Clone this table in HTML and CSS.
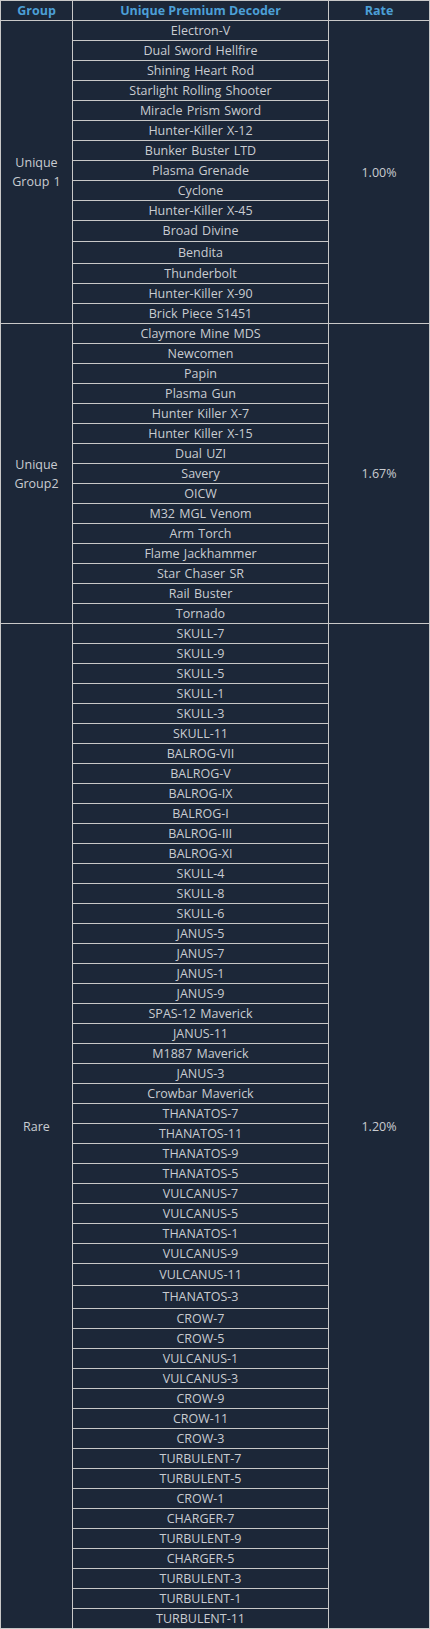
FILE: index.html
```html
<!DOCTYPE html>
<html lang="en">
<head>
<meta charset="utf-8">
<title>Unique Premium Decoder</title>
<link rel="stylesheet" href="styles.css">
</head>
<body>
<div class="table">
  <div class="row head">
    <div class="cell">Group</div>
    <div class="cell">Unique Premium Decoder</div>
    <div class="cell">Rate</div>
  </div>

  <div class="row">
    <div class="cell group">Unique<br>Group 1</div>
    <div class="items">
      <div class="item">Electron-V</div>
      <div class="item">Dual Sword Hellfire</div>
      <div class="item">Shining Heart Rod</div>
      <div class="item">Starlight Rolling Shooter</div>
      <div class="item">Miracle Prism Sword</div>
      <div class="item">Hunter-Killer X-12</div>
      <div class="item">Bunker Buster LTD</div>
      <div class="item">Plasma Grenade</div>
      <div class="item">Cyclone</div>
      <div class="item">Hunter-Killer X-45</div>
      <div class="item tall1">Broad Divine</div>
      <div class="item tall2">Bendita</div>
      <div class="item">Thunderbolt</div>
      <div class="item">Hunter-Killer X-90</div>
      <div class="item">Brick Piece S1451</div>
    </div>
    <div class="cell rate">1.00%</div>
  </div>

  <div class="row">
    <div class="cell group">Unique<br>Group2</div>
    <div class="items">
      <div class="item">Claymore Mine MDS</div>
      <div class="item">Newcomen</div>
      <div class="item">Papin</div>
      <div class="item">Plasma Gun</div>
      <div class="item">Hunter Killer X-7</div>
      <div class="item">Hunter Killer X-15</div>
      <div class="item">Dual UZI</div>
      <div class="item">Savery</div>
      <div class="item">OICW</div>
      <div class="item">M32 MGL Venom</div>
      <div class="item">Arm Torch</div>
      <div class="item">Flame Jackhammer</div>
      <div class="item">Star Chaser SR</div>
      <div class="item">Rail Buster</div>
      <div class="item">Tornado</div>
    </div>
    <div class="cell rate">1.67%</div>
  </div>

  <div class="row">
    <div class="cell group">Rare</div>
    <div class="items">
      <div class="item">SKULL-7</div>
      <div class="item">SKULL-9</div>
      <div class="item">SKULL-5</div>
      <div class="item">SKULL-1</div>
      <div class="item">SKULL-3</div>
      <div class="item">SKULL-11</div>
      <div class="item">BALROG-VII</div>
      <div class="item">BALROG-V</div>
      <div class="item">BALROG-IX</div>
      <div class="item">BALROG-I</div>
      <div class="item">BALROG-<span class="numeral">Ⅲ</span></div>
      <div class="item">BALROG-XI</div>
      <div class="item">SKULL-4</div>
      <div class="item">SKULL-8</div>
      <div class="item">SKULL-6</div>
      <div class="item">JANUS-5</div>
      <div class="item">JANUS-7</div>
      <div class="item">JANUS-1</div>
      <div class="item">JANUS-9</div>
      <div class="item">SPAS-12 Maverick</div>
      <div class="item">JANUS-11</div>
      <div class="item">M1887 Maverick</div>
      <div class="item">JANUS-3</div>
      <div class="item">Crowbar Maverick</div>
      <div class="item">THANATOS-7</div>
      <div class="item">THANATOS-11</div>
      <div class="item">THANATOS-9</div>
      <div class="item">THANATOS-5</div>
      <div class="item">VULCANUS-7</div>
      <div class="item">VULCANUS-5</div>
      <div class="item">THANATOS-1</div>
      <div class="item">VULCANUS-9</div>
      <div class="item tall2">VULCANUS-11</div>
      <div class="item tall3">THANATOS-3</div>
      <div class="item">CROW-7</div>
      <div class="item">CROW-5</div>
      <div class="item">VULCANUS-1</div>
      <div class="item">VULCANUS-3</div>
      <div class="item">CROW-9</div>
      <div class="item">CROW-11</div>
      <div class="item">CROW-3</div>
      <div class="item">TURBULENT-7</div>
      <div class="item">TURBULENT-5</div>
      <div class="item">CROW-1</div>
      <div class="item">CHARGER-7</div>
      <div class="item">TURBULENT-9</div>
      <div class="item">CHARGER-5</div>
      <div class="item">TURBULENT-3</div>
      <div class="item">TURBULENT-1</div>
      <div class="item">TURBULENT-11</div>
    </div>
    <div class="cell rate">1.20%</div>
  </div>
</div>
</body>
</html>
```

FILE: styles.css
```css
html, body {
  margin: 0;
  padding: 0;
  background: #1c2738;
}

.table {
  width: 430px;
  box-sizing: border-box;
  display: flex;
  flex-direction: column;
  gap: 1px;
  padding: 1px;
  background: #c8c8c8;
  font-family: "Open Sans", "Noto Sans CJK KR", sans-serif;
  font-size: 12.5px;
  word-spacing: 1px;
  color: #c9ccd1;
}

.row {
  display: grid;
  grid-template-columns: 71px 255px 100px;
  gap: 1px;
}

.cell {
  background: #1c2738;
  display: flex;
  align-items: center;
  justify-content: center;
  text-align: center;
  line-height: 19px;
}

.head .cell {
  height: 19px;
  font-weight: 700;
  color: #4c9fd6;
  word-spacing: 0;
}

.items {
  display: flex;
  flex-direction: column;
  gap: 1px;
}

.item {
  background: #1c2738;
  height: 19px;
  line-height: 19px;
  text-align: center;
  white-space: nowrap;
  overflow: hidden;
}

.numeral {
  font-family: "Noto Sans CJK KR", "Noto Sans CJK JP", sans-serif;
  font-size: 11.5px;
}

.item.tall1 {
  height: 20px;
  line-height: 20px;
}

.item.tall2 {
  height: 21px;
  line-height: 21px;
}

.item.tall3 {
  height: 22px;
  line-height: 22px;
}
```
